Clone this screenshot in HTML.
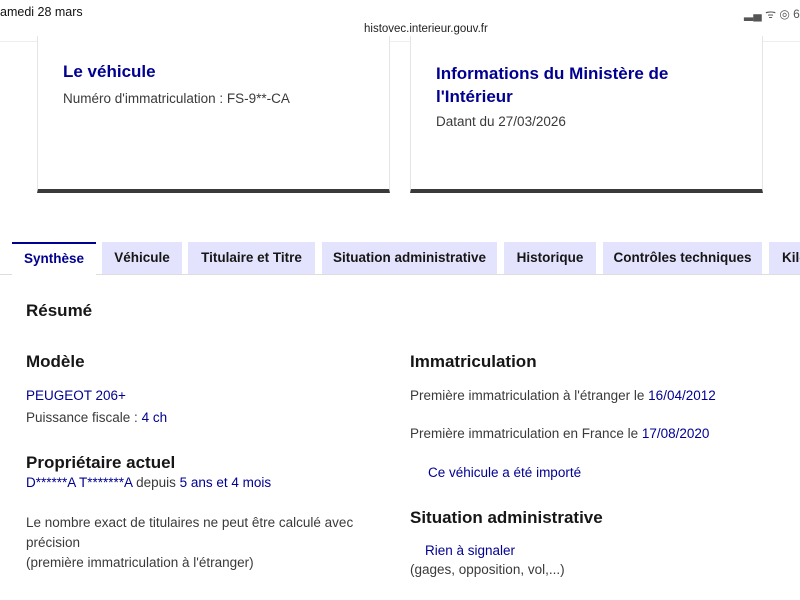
<!DOCTYPE html>
<html><head><meta charset="utf-8"><style>
*{margin:0;padding:0;box-sizing:border-box}
html,body{width:800px;height:600px;overflow:hidden}
body{background:#fff;font-family:"Liberation Sans",sans-serif;color:#3a3a3a;position:relative}
.a{position:absolute;white-space:nowrap}
.blue{color:#000091}
.card{position:absolute;top:36px;height:157px;border:1px solid #e5e5e5;border-top:none;border-bottom:4px solid #3a3a3a;background:#fff}
.tab{position:absolute;top:242px;height:32px;background:#e3e3fd;color:#161616;font-weight:bold;font-size:13.5px;line-height:32px;text-align:center;overflow:hidden;white-space:nowrap}
.h{font-weight:bold;font-size:17px;color:#161616}
.t{font-size:13.5px}
</style></head><body>
<div class="a" style="left:0;top:5px;font-size:12.5px;color:#111">amedi 28 mars</div>
<div class="a" style="left:364px;top:23px;font-size:11.5px;color:#222">histovec.interieur.gouv.fr</div>
<div class="a" style="left:744px;top:5px;font-size:12px;color:#555">▂▄ ᯤ ◎ 6</div>
<div style="position:absolute;left:0;top:41px;width:800px;height:1px;background:#eee"></div>
<div class="card" style="left:37px;width:353px"></div>
<div class="card" style="left:410px;width:353px"></div>
<div class="a blue" style="left:63px;top:62px;font-size:17px;font-weight:bold">Le véhicule</div>
<div class="a t" style="left:63px;top:91px">Numéro d'immatriculation : FS-9**-CA</div>
<div class="a blue" style="left:436px;top:62px;font-size:17px;font-weight:bold;line-height:23px">Informations du Ministère de<br>l'Intérieur</div>
<div class="a t" style="left:436px;top:114px">Datant du 27/03/2026</div>
<div style="position:absolute;left:0;top:274px;width:800px;height:326px;border-top:1px solid #ddd;background:#fff"></div>
<div class="tab" style="left:12px;width:84px;background:#fff;border-top:2px solid #000091;color:#000091;height:34px;line-height:30px">Synthèse</div>
<div class="tab" style="left:102px;width:80px">Véhicule</div>
<div class="tab" style="left:188px;width:127px">Titulaire et Titre</div>
<div class="tab" style="left:322px;width:175px">Situation administrative</div>
<div class="tab" style="left:504px;width:92px">Historique</div>
<div class="tab" style="left:603px;width:159px">Contrôles techniques</div>
<div class="tab" style="left:769px;width:31px;text-align:left;padding-left:13px">Kilométrage</div>
<div class="a h" style="left:26px;top:301px">Résumé</div>
<div class="a h" style="left:26px;top:352px">Modèle</div>
<div class="a t blue" style="left:26px;top:388px">PEUGEOT 206+</div>
<div class="a t" style="left:26px;top:410px">Puissance fiscale : <span class="blue">4 ch</span></div>
<div class="a h" style="left:26px;top:453px">Propriétaire actuel</div>
<div class="a t" style="left:26px;top:475px"><span class="blue">D******A T*******A</span> depuis <span class="blue">5 ans et 4 mois</span></div>
<div class="a t" style="left:26px;top:513px;line-height:20px">Le nombre exact de titulaires ne peut être calculé avec<br>précision<br>(première immatriculation à l'étranger)</div>
<div class="a h" style="left:410px;top:352px">Immatriculation</div>
<div class="a t" style="left:410px;top:388px">Première immatriculation à l'étranger le <span class="blue">16/04/2012</span></div>
<div class="a t" style="left:410px;top:426px">Première immatriculation en France le <span class="blue">17/08/2020</span></div>
<div class="a t blue" style="left:428px;top:465px">Ce véhicule a été importé</div>
<div class="a h" style="left:410px;top:508px">Situation administrative</div>
<div class="a t blue" style="left:425px;top:543px">Rien à signaler</div>
<div class="a t" style="left:410px;top:562px">(gages, opposition, vol,...)</div>
</body></html>
